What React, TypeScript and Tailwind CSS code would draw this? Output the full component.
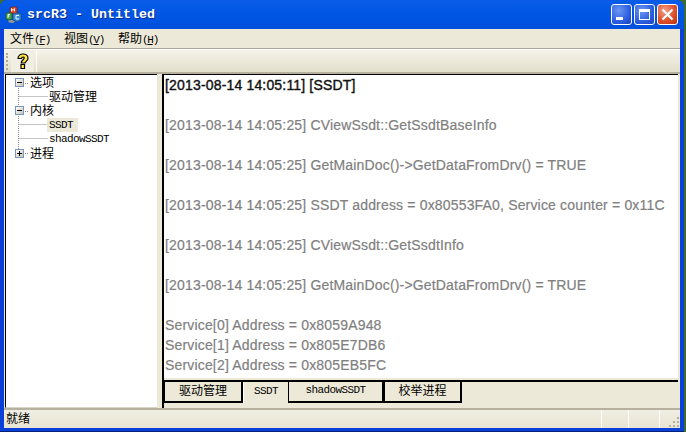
const logLines = [
  { text: "[2013-08-14 14:05:11] [SSDT]", dark: true },
  { text: "" },
  { text: "[2013-08-14 14:05:25] CViewSsdt::GetSsdtBaseInfo" },
  { text: "" },
  { text: "[2013-08-14 14:05:25] GetMainDoc()->GetDataFromDrv() = TRUE" },
  { text: "" },
  { text: "[2013-08-14 14:05:25] SSDT address = 0x80553FA0, Service counter = 0x11C" },
  { text: "" },
  { text: "[2013-08-14 14:05:25] CViewSsdt::GetSsdtInfo" },
  { text: "" },
  { text: "[2013-08-14 14:05:25] GetMainDoc()->GetDataFromDrv() = TRUE" },
  { text: "" },
  { text: "Service[0] Address = 0x8059A948" },
  { text: "Service[1] Address = 0x805E7DB6" },
  { text: "Service[2] Address = 0x805EB5FC" },
];

const cjk = "font-['Liberation_Sans','Noto_Sans_CJK_SC',sans-serif]";
const mono = "font-['Liberation_Mono',monospace]";

function AppIcon() {
  return (
    <svg width="18" height="18" viewBox="0 0 18 18" className="shrink-0">
      <path d="M5 2l4-1.500 3 1v5.500l-3 1-4-1z" fill="#d8402a" stroke="#6a2a20" strokeWidth="0.7" />
      <path d="M1 7.500l3-1 3 1v5.500l-3 1-3-1z" fill="#3f9f4a" stroke="#25552a" strokeWidth="0.7" />
      <path d="M8 8l4-1 4 1v6l-4 1.500-4-1.500z" fill="#3a8fd0" stroke="#1c4c78" strokeWidth="0.7" />
      <path d="M3 14.500l4-.5 3 1.500-2 1.500-4-.5z" fill="#9a9a88" />
      <path d="M6.500 5.500v-3l1.500 2 1.500-2v3" stroke="#fff" strokeWidth="0.9" fill="none" />
      <path d="M3 12v-3.500h2M3 10h1.500" stroke="#fff" strokeWidth="0.9" fill="none" />
      <path d="M14 9.500h-3v3.500h3" stroke="#fff" strokeWidth="0.9" fill="none" />
    </svg>
  );
}

function CaptionButton({ kind }: { kind: "min" | "max" | "close" }) {
  const bg =
    kind === "close"
      ? "bg-[radial-gradient(circle_at_35%_30%,#f0a08a,#e0512c_55%,#b8300f)]"
      : "bg-[radial-gradient(circle_at_35%_30%,#6d97f2,#2c5ee0_60%,#1c3fc4)]";
  return (
    <div className={`w-[21px] h-[21px] rounded-[3px] border border-white flex items-center justify-center ${bg}`}>
      <svg width="15" height="15" viewBox="0 0 15 15">
        {kind === "min" && <path d="M2 10h7v3H2z" fill="#fff" />}
        {kind === "max" && (
          <path d="M2 2h11v11H2zM3 5v7h9V5z" fill="#fff" fillRule="evenodd" />
        )}
        {kind === "close" && (
          <path d="M2.500 2.500l10 10M12.500 2.500l-10 10" stroke="#fff" strokeWidth="2.200" />
        )}
      </svg>
    </div>
  );
}

function MenuLabel({ cn, letter }: { cn: string; letter: string }) {
  return (
    <span className={`${cjk} w-[54px] text-[12px] text-black leading-none whitespace-nowrap`}>
      {cn}
      <span className={`${mono} text-[11px] tracking-[-1.300px]`}>
        (<u>{letter}</u>)
      </span>
    </span>
  );
}

function HelpIcon() {
  return (
    <svg width="14" height="17" viewBox="0 0 14 17">
      <path
        d="M2 5.500C2 2.500 4.500 1 7 1s5 1.500 5 4.200c0 2.400-2.600 3-3 4.800H5.200c0-2.800 3-3.400 3-4.900C8.200 4.300 7.700 4 7 4s-1.500.4-1.500 1.500z"
        fill="#ffe640"
        stroke="#000"
        strokeWidth="1.200"
      />
      <path d="M5 11.500h3.500V15.500H5z" fill="#ffe640" stroke="#000" strokeWidth="1.200" />
    </svg>
  );
}

function Expander({ open }: { open: boolean }) {
  return (
    <div className="w-[9px] h-[9px] border border-[#7a96b8] bg-gradient-to-br from-white to-[#c8c4b4] flex items-center justify-center relative shrink-0">
      <div className="w-[5px] h-px bg-black" />
      {!open && <div className="absolute w-px h-[5px] bg-black" />}
    </div>
  );
}

function TreeRow({
  label,
  level,
  open,
  selected,
  asMono,
}: {
  label: string;
  level: 0 | 1;
  open?: boolean;
  selected?: boolean;
  asMono?: boolean;
}) {
  return (
    <div className={`h-[14.200px] flex items-center ${level === 0 ? "pl-[9px]" : "pl-[41px]"}`}>
      {level === 0 && <Expander open={!!open} />}
      {level === 0 && <div className="w-[4px]" />}
      <span
        className={`leading-none whitespace-nowrap text-black ${
          asMono ? `${mono} text-[11px] tracking-[-0.600px]` : `${cjk} text-[12px]`
        } ${selected ? "bg-[#ece9d8] h-[14px] flex items-center px-[2px] w-[31px]" : "px-[2px]"}`}
      >
        {label}
      </span>
    </div>
  );
}

function Tab({
  label,
  width,
  active,
  asMono,
}: {
  label: string;
  width: string;
  active?: boolean;
  asMono?: boolean;
}) {
  return (
    <div
      className={`${width} h-[21px] pb-[2px] bg-[#ece9d8] flex items-center justify-center text-black leading-none ${
        asMono ? `${mono} text-[11px] tracking-[-0.600px]` : `${cjk} text-[12px]`
      } ${active ? "border-l border-white" : "border-r-2 border-b-2 border-l border-black"}`}
    >
      {label}
    </div>
  );
}

export default function App() {
  return (
    <div className="w-[686px] h-[432px] bg-[#3f6b2c] overflow-hidden">
      <div className="w-[684px] h-[432px] rounded-t-[7px] bg-[#0a3fd8] border-b border-[#06217a] flex flex-col overflow-hidden">
        {/* Title bar */}
        <div className="h-[29px] shrink-0 flex items-center pl-[5px] pr-[6px] bg-gradient-to-b from-[#0a5ce8] via-[#0056e4] to-[#0050dc]">
          <AppIcon />
          <span className={`${mono} font-bold text-[13.330px] text-white ml-[4px] whitespace-nowrap [text-shadow:1px_1px_0_#0a2a90]`}>
            srcR3 - Untitled
          </span>
          <div className="ml-auto flex gap-[2px]">
            <CaptionButton kind="min" />
            <CaptionButton kind="max" />
            <CaptionButton kind="close" />
          </div>
        </div>

        <div className="flex-1 min-h-0 mx-[4px] bg-[#ece9d8] flex flex-col">
          {/* Menu */}
          <div className="h-[20px] shrink-0 flex items-center pl-[6px] pt-[1px] border-b border-[#aca899]">
            <MenuLabel cn="文件" letter="F" />
            <MenuLabel cn="视图" letter="V" />
            <MenuLabel cn="帮助" letter="H" />
          </div>

          {/* Toolbar */}
          <div className="h-[25px] shrink-0 flex items-center pl-[2px] border-t border-white bg-gradient-to-b from-[#f5f3ea] to-[#e2dfcb] border-b-2 border-b-[#b5b19e]">
            <div className="w-[2px] h-[17px] border-l-2 border-dotted border-[#b0ac98]" />
            <div className="w-[23px] h-[22px] ml-[3px] bg-[#f1efe3] flex items-center justify-center">
              <HelpIcon />
            </div>
            <div className="w-px h-[22px] ml-[2px] bg-white" />
          </div>

          {/* Panes */}
          <div className="flex-1 min-h-0 flex pl-[1px] pr-[2px]">
            <div className="w-[152px] shrink-0 bg-white border-t border-l border-black border-b border-b-[#d8d4c4] relative pt-[0.500px]">
              <svg width="44" height="90" className="absolute left-0 top-0" aria-hidden>
                <path
                  d="M12.500 13v20M12.500 41v33M17 8.500h5M17 36.500h5M17 78.500h5M12.500 21.500h29M12.500 49.500h29M12.500 63.500h29"
                  stroke="#8a8a8a"
                  strokeDasharray="1 1"
                  fill="none"
                />
              </svg>
              <div className="relative">
                <TreeRow label="选项" level={0} open />
                <TreeRow label="驱动管理" level={1} />
                <TreeRow label="内核" level={0} open />
                <TreeRow label="SSDT" level={1} selected asMono />
                <TreeRow label="shadowSSDT" level={1} asMono />
                <TreeRow label="进程" level={0} />
              </div>
            </div>

            <div className="w-[5px] shrink-0" />

            <div className="flex-1 min-w-0 border-l-2 border-black flex flex-col">
              <div className="h-[304px] shrink-0 bg-white border-t border-black overflow-hidden pl-[1px]">
                {logLines.map((line, i) => (
                  <div
                    key={i}
                    className={`h-[20px] flex items-center font-['Liberation_Sans',sans-serif] text-[14px] tracking-[0.170px] whitespace-nowrap ${
                      line.dark
                        ? "text-[#111] [-webkit-text-stroke:0.4px_#111]"
                        : "text-[#808080] [-webkit-text-stroke:0.2px_#808080]"
                    }`}
                  >
                    {line.text}
                  </div>
                ))}
              </div>
              <div className="h-[2px] shrink-0" />
              <div className="flex border-t-2 border-black">
                <Tab label="驱动管理" width="w-[79px]" />
                <Tab label="SSDT" width="w-[45px]" active asMono />
                <Tab label="shadowSSDT" width="w-[96px]" asMono />
                <Tab label="校举进程" width="w-[78px]" />
              </div>
            </div>
          </div>

          {/* Status bar */}
          <div className="h-[20px] shrink-0 flex items-center border-t-2 border-[#b5b19e] bg-gradient-to-b from-[#f0eee2] to-[#e8e5d4] relative">
            <span className={`${cjk} text-[12px] leading-none text-black pl-[2px]`}>就绪</span>
            <div className="ml-auto flex h-full">
              <div className="w-[27px] border-l border-white" />
              <div className="w-[31px] border-l border-white" />
              <div className="w-[21px] border-l border-white relative">
                <svg width="12" height="12" className="absolute right-0 bottom-0" aria-hidden>
                  <path d="M9 1h2v2H9zM5 5h2v2H5zM9 5h2v2H9zM1 9h2v2H1zM5 9h2v2H5zM9 9h2v2H9z" fill="#b5b19e" />
                </svg>
              </div>
            </div>
          </div>
        </div>
        <div className="h-[3px] shrink-0" />
      </div>
    </div>
  );
}
